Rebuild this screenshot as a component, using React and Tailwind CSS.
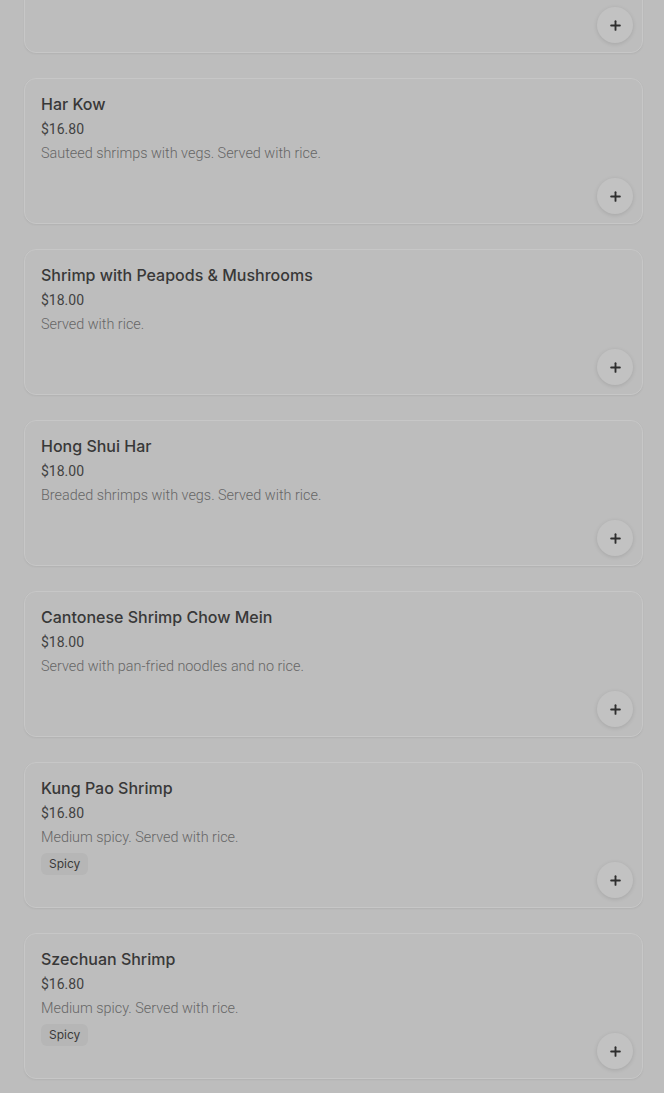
import { Plus } from 'lucide-react';

const items = [
  { name: 'Shrimp with Lobster Sauce', price: '$16.80', desc: 'Served with rice.' },
  { name: 'Har Kow', price: '$16.80', desc: 'Sauteed shrimps with vegs. Served with rice.' },
  { name: 'Shrimp with Peapods & Mushrooms', price: '$18.00', desc: 'Served with rice.' },
  { name: 'Hong Shui Har', price: '$18.00', desc: 'Breaded shrimps with vegs. Served with rice.' },
  { name: 'Cantonese Shrimp Chow Mein', price: '$18.00', desc: 'Served with pan-fried noodles and no rice.' },
  { name: 'Kung Pao Shrimp', price: '$16.80', desc: 'Medium spicy. Served with rice.', tag: 'Spicy' },
  { name: 'Szechuan Shrimp', price: '$16.80', desc: 'Medium spicy. Served with rice.', tag: 'Spicy' },
];

function MenuCard({ item }) {
  return (
    <div className="relative h-[146px] rounded-xl border border-[#c7c7c7] bg-[#bdbdbd] px-4 pt-[13px] shadow-[0_1px_2px_rgba(0,0,0,0.06)]">
      <h3 className="text-base font-medium leading-6 text-[#383838]">{item.name}</h3>
      <p className="mt-[1px] font-['Roboto',sans-serif] text-sm leading-6 text-[#424242]">{item.price}</p>
      <p className="mt-[1px] font-['Roboto',sans-serif] text-[14.4px] font-light leading-6 text-[#666666]">{item.desc}</p>
      {item.tag && (
        <span className="mt-[1px] inline-block rounded-md bg-[#b6b6b6] px-2 py-[3px] text-xs leading-4 text-[#3a3a3a]">
          {item.tag}
        </span>
      )}
      {/* add button */}
      <button className="absolute bottom-[9px] right-[9px] flex h-9 w-9 items-center justify-center rounded-full bg-[#c2c2c2] text-[#2e2e2e] shadow-[0_1px_4px_rgba(0,0,0,0.12)]">
        <Plus size={15} strokeWidth={3} />
      </button>
    </div>
  );
}

export default function App() {
  return (
    <div className="min-h-screen overflow-hidden bg-[#bdbdbd] font-['Inter',sans-serif]">
      <div className="-mt-[93px] flex flex-col gap-[25px] pl-6 pr-[21px]">
        {items.map((item) => (
          <MenuCard key={item.name} item={item} />
        ))}
      </div>
    </div>
  );
}
